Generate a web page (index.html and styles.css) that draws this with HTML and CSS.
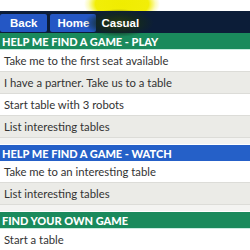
FILE: index.html
```html
<!DOCTYPE html>
<html lang="en">
<head>
  <meta charset="UTF-8" />
  <title>Casual</title>
  <link rel="stylesheet" href="styles.css">
</head>
<body>
  <div class="glow"></div>
  <div class="top"></div>
  <div class="nav">
    <button class="btn">Back</button>
    <button class="btn">Home</button>
    <span class="title">Casual</span>
  </div>

  <div class="section">
    <h2 class="head green">HELP ME FIND A GAME - PLAY</h2>
    <div class="row">Take me to the first seat available</div>
    <div class="row alt">I have a partner. Take us to a table</div>
    <div class="row">Start table with 3 robots</div>
    <div class="row alt">List interesting tables</div>
  </div>

  <div class="section">
    <h2 class="head blue">HELP ME FIND A GAME - WATCH</h2>
    <div class="row">Take me to an interesting table</div>
    <div class="row alt">List interesting tables</div>
  </div>

  <div class="section">
    <h2 class="head green">FIND YOUR OWN GAME</h2>
    <div class="row">Start a table</div>
  </div>
</body>
</html>
```

FILE: styles.css
```css
body {
  margin: 0;
  font-family: Lato, "Liberation Sans", sans-serif;
  background: #fff;
  overflow: hidden;
}
.glow {
  position: absolute;
  left: 84px;
  top: -16px;
  width: 76px;
  height: 40px;
  background: radial-gradient(closest-side, #f0ec00 0%, #f2ee08 70%, rgba(248,246,120,0.5) 88%, rgba(255,255,255,0) 100%);
}
.top {
  height: 11px;
}
.nav {
  position: relative;
  height: 22px;
  background: #0c1d38;
  display: flex;
  align-items: flex-end;
  gap: 3px;
}
.nav::after {
  content: "";
  position: absolute;
  left: 84px;
  top: -2px;
  width: 70px;
  height: 28px;
  background: radial-gradient(closest-side, rgba(40,60,10,0.9) 0%, rgba(20,42,28,0.75) 60%, rgba(12,29,56,0) 100%);
}
.btn {
  height: 18px;
  margin-bottom: 1px;
  padding: 0 9px 0 10px;
  border: none;
  border-radius: 2px;
  background: #2457c5;
  color: #fff;
  font-family: "Liberation Sans", Arial, sans-serif;
  font-weight: bold;
  font-size: 11.5px;
  line-height: 18px;
}
.btn + .btn {
  padding: 0 7px 0 8px;
}
.title {
  position: relative;
  z-index: 1;
  margin-left: 2px;
  color: #fff;
  font-family: "Liberation Sans", Arial, sans-serif;
  font-weight: bold;
  font-size: 11.5px;
  line-height: 20px;
}
.section {
  padding-bottom: 6px;
  background: #f3f3f1;
  border-bottom: 1px solid #fff;
}
.head {
  margin: 0;
  height: 16px;
  padding-left: 2px;
  color: #fff;
  font-size: 11px;
  font-weight: 900;
  line-height: 17px;
}
.green {
  background: #1a8a5c;
  border-bottom: 1px solid #c9ece0;
}
.blue {
  background: #2560c8;
}
.row {
  height: 21px;
  padding-left: 4px;
  line-height: 21px;
  font-size: 11.3px;
  color: #333;
  background: #fff;
  border-bottom: 1px solid #dcdcd8;
}
.alt {
  background: #ebebe7;
}
```
